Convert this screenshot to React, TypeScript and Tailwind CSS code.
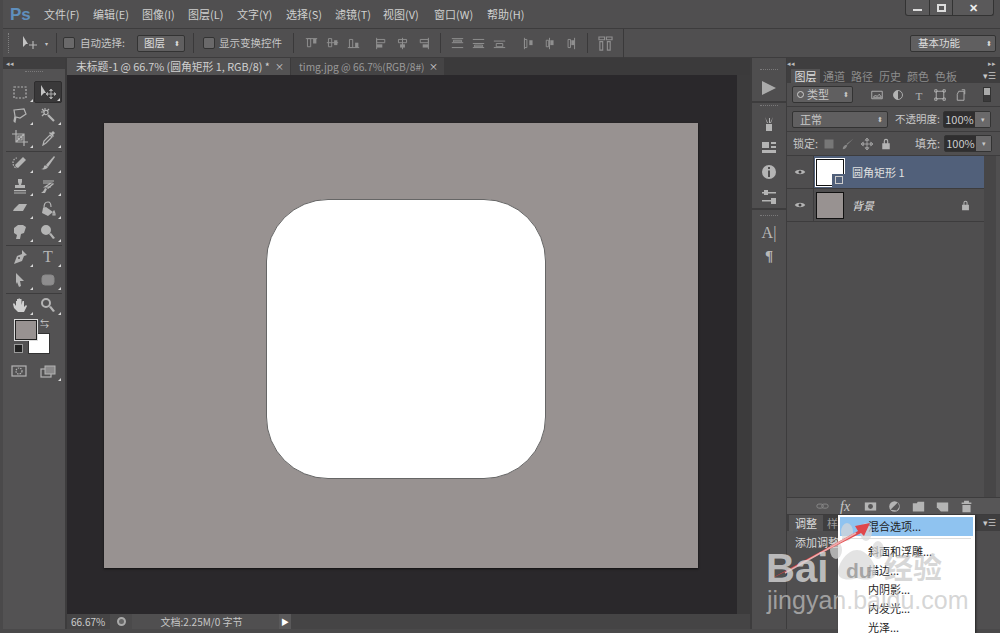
import type { ReactNode } from 'react';

const menus = [
  { label: '文件(F)', width: 'w-[49px]' },
  { label: '编辑(E)', width: 'w-[49px]' },
  { label: '图像(I)', width: 'w-[46px]' },
  { label: '图层(L)', width: 'w-[49px]' },
  { label: '文字(Y)', width: 'w-[49px]' },
  { label: '选择(S)', width: 'w-[49px]' },
  { label: '滤镜(T)', width: 'w-[48px]' },
  { label: '视图(V)', width: 'w-[51px]' },
  { label: '窗口(W)', width: 'w-[53px]' },
  { label: '帮助(H)', width: 'w-[40px]' },
];

function Glyph({ size = 16, children, className = '' }: { size?: number; children: ReactNode; className?: string }) {
  return (
    <svg width={size} height={size} viewBox="0 0 16 16" fill="#b4b4b4" stroke="none" className={className}>
      {children}
    </svg>
  );
}

const line = { fill: 'none', stroke: '#b4b4b4', strokeWidth: 1.2 };
const dim = { fill: 'none', stroke: '#8f8f8f', strokeWidth: 1.2 };

const toolIcons: ReactNode[][] = [
  [
    <rect x="2" y="3" width="12" height="11" {...line} strokeDasharray="2 1.5" />,
    <>
      <path d="M1 1v11l3-3 2 0z" fill="#c4c4c4" />
      <path d="M11 6v8M7 10h8M11 5l-1.500 1.500h3zM11 15l-1.500-1.500h3zM6 10l1.500-1.500v3zM16 10l-1.500-1.500v3z" {...line} strokeWidth={0.9} />
    </>,
  ],
  [
    <path d="M2 3l10-1 2 5-6 4-4-1-1 5-1-1 1-5z" {...line} />,
    <>
      <path d="M8 8l6 6" stroke="#b4b4b4" strokeWidth="2.200" />
      <path d="M5 1v3M1 5h3M2 2l2 2M9 2L7 4M2 9l2-2M8 5a2 2 0 1 1-4 1 2 2 0 0 1 4-1z" {...line} />
    </>,
  ],
  [
    <path d="M4 0v12h12M0 4h12v12M12 4L4 12M6 6h4v4H6z" {...line} />,
    <>
      <path d="M3 15l1-4 6-6 2 2-6 6z" {...line} />
      <path d="M9 3l1-1 1 1 2-2 2 2-2 2 1 1-1 1z" />
    </>,
  ],
  'sep' as never,
  [
    <>
      <path d="M5 3a4 5 0 1 0 0 10" {...line} strokeDasharray="1.500 1.200" />
      <path d="M4 12l-1-2 8-8 3 3-8 8z" />
    </>,
    <>
      <path d="M6 10L14 1l1 1-7 10z" />
      <path d="M1 14c2 0 3-1 3-3 1-1 3 0 4 1-1 2-4 3-7 2z" />
    </>,
  ],
  [
    <>
      <path d="M6 1h4v3l-1 3h4v3H3V7h4L6 4z" />
      <path d="M2 12h12v1.200H2zM2 14.500h12v1H2z" />
    </>,
    <>
      <path d="M3 5h8L5 9h6M3 3h11" {...line} />
      <path d="M5 10l2 1-2 4H1c2-1 3-3 4-5zM14 6L8 11l-1-1 6-5z" />
    </>,
  ],
  [
    <path d="M7 3h8l-4 7H1l1-2z" />,
    <>
      <path d="M6 6l7 5-5 4-6-3 1-5z" />
      <path d="M4 7c0-4 1-6 4-6 2 0 3 2 3 5M14 10c1 2 1 3 1 4h-2c0-2 0-3 1-4z" {...line} />
    </>,
  ],
  [
    <path d="M2 4l4-3h5l3 2-2 6-3 1-1 5H4l1-4-3-2z" />,
    <path d="M6 1a5 5 0 1 1 0 10A5 5 0 0 1 6 1zM9 10l2-1 4 5-2 1z" />,
  ],
  'sep' as never,
  [
    <>
      <path d="M10 1l5 5-3 1-2 5-8 3 3-8 5-2z" />
      <circle cx="7" cy="9" r="1" fill="#4f4e4f" />
    </>,
    <text x="8" y="13" textAnchor="middle" fontFamily="Liberation Serif" fontSize="16" fill="#b4b4b4">T</text>,
  ],
  [
    <path d="M4 1l8 8-4 0 1 5-2 1-2-5-1 2z" />,
    <rect x="2" y="3" width="12" height="10" rx="3" stroke="#888" strokeWidth="1" fill="#8e8d8e" />,
  ],
  'sep' as never,
  [
    <path d="M4 8V4h1v4V2h1.500v6V1.500H8V8V2h1.500v6l1-4h1.500v6l2-2 1 1-3 6H6L2 11 1 7l1-1 2 3z" fill="#d0d0d0" />,
    <path d="M6 1a5 5 0 1 1 0 10A5 5 0 0 1 6 1zM6 3a3 3 0 1 0 0 6 3 3 0 0 0 0-6zM9 10l2-1 4 5-2 1z" />,
  ],
];

// paths for the align and distribute buttons of the options bar
const alignIcons = [
  ['M1 2h14M3 2h4v10H3z', 'M10 2h4v6h-4z'],
  ['M1 7h14M3 2h4v10H3z', 'M10 4h4v6h-4z'],
  ['M1 13h14M3 3h4v10H3z', 'M10 7h4v6h-4z'],
];
const alignRowIcons = [
  ['M2 1v14M2 3h10v4H2z', 'M2 9h7v4H2z'],
  ['M8 1v14M3 3h10v4H3z', 'M5 9h6v4H5z'],
  ['M14 1v14M4 3h10v4H4z', 'M7 9h7v4H7z'],
];
const distributeRows = ['M1 2h14M1 7h14M1 13h14M3 4h10v2H3z', 'M1 3h14M1 8h14M1 13h14M3 10h10v2H3z', 'M1 5h14M1 13h14M4 8h8v4H4z'];
const distributeCols = [
  ['M3 1v14M3 3h3v10H3z', 'M9 4h4v6H9z'],
  ['M8 1v14M4 4h3v8H4z', 'M9 4h4v6H9z'],
  ['M13 1v14M5 3h3v10H5z', 'M9 4h4v6H9z'],
];

function CornerMark() {
  return <span className="absolute right-[1px] bottom-[1px] h-0 w-0 border-b-[3px] border-l-[3px] border-b-[#d8d8d8] border-l-transparent" />;
}

function Grip() {
  return <div className="mx-auto h-[2px] w-[18px] border-t border-dotted border-[#7a797a]" />;
}

function ToolPanel() {
  return (
    <aside className="flex w-[62px] flex-col bg-[#535253]">
      <div className="flex h-[11px] items-center bg-[#3f3e3f] pl-[3px] text-[7px] leading-none text-[#bbb]">◂◂</div>
      <div className="pt-[2px] pb-[8px]"><Grip /></div>
      <div className="flex flex-col">
        {toolIcons.map((row, i) =>
          (row as unknown) === 'sep' ? (
            <div key={i} className="mx-[3px] my-[0.5px] h-px bg-[#3d3c3d]" />
          ) : (
            <div key={i} className="flex h-[23px] pl-[3px]">
              {row.map((icon, j) => (
                <div
                  key={j}
                  className={`relative flex h-[22px] w-[28px] items-center justify-center ${i === 0 && j === 1 ? 'rounded-[2px] border border-[#2e2d2e] bg-[#3a393a]' : ''}`}
                >
                  <Glyph>{icon}</Glyph>
                  <CornerMark />
                </div>
              ))}
            </div>
          ),
        )}
      </div>
      <div className="mt-[3px] ml-[12px] flex items-start">
        <div className="z-10 h-[20px] w-[22px] border border-[#222] bg-[#989291] outline outline-[#ddd]" />
        <div className="mt-[-1px] ml-[3px] text-[9px] leading-[10px] text-[#ccc]">⇆</div>
      </div>
      <div className="mt-[-7px] ml-[11px] flex items-end">
        <div className="mb-[1px] h-[9px] w-[9px] border border-[#999] bg-[#222]" />
        <div className="ml-[5px] h-[21px] w-[22px] border border-[#333] bg-white" />
      </div>
      <div className="mt-[6px] flex items-center pl-[2px]">
        <div className="flex h-[22px] w-[28px] items-center justify-center">
          <Glyph>
            <rect x="1" y="3" width="14" height="10" {...line} />
            <circle cx="8" cy="8" r="3" {...line} strokeDasharray="1.500 1" />
          </Glyph>
        </div>
        <div className="relative ml-[1px] flex h-[22px] w-[28px] items-center justify-center">
          <Glyph>
            <rect x="1" y="6" width="10" height="8" {...line} />
            <rect x="5" y="3" width="10" height="8" fill="#8a898a" stroke="#b4b4b4" />
          </Glyph>
          <CornerMark />
        </div>
      </div>
    </aside>
  );
}

function AlignGroup({ icons }: { icons: string[][] }) {
  return (
    <div className="flex gap-[8px]">
      {icons.map(([outline, filled]) => (
        <Glyph key={outline} size={13}>
          <path d={outline} {...dim} />
          {filled && <path d={filled} fill="#8f8f8f" />}
        </Glyph>
      ))}
    </div>
  );
}

function OptionsBar() {
  return (
    <div className="flex h-[30px] items-center border-y border-[#3d3c3d] bg-[#504f50] text-[10.500px] text-[#c6c6c6]">
      <div className="ml-[5px] h-[20px] w-[3px] border-l border-dotted border-[#808080]" />
      <Glyph size={16} className="ml-[11px]">
        <path d="M1 1v11l3-3 2 0z" fill="#c4c4c4" />
        <path d="M11 6v8M7 10h8" {...line} />
      </Glyph>
      <span className="ml-[7px] w-[8px] text-[6px]">▾</span>
      <div className="ml-[3px] h-[20px] w-px bg-[#3a393a]" />
      <div className="ml-[6px] h-[12px] w-[12px] rounded-[2px] border border-[#333] bg-[#6a696a]" />
      <span className="ml-[5px] w-[49px] whitespace-nowrap">自动选择:</span>
      <div className="ml-[8px] flex h-[17px] w-[48px] items-center justify-between rounded-[2px] border border-[#333] bg-[#605f60] pr-[4px] pl-[6px] text-[#ddd]">
        图层<span className="text-[7px]">⬍</span>
      </div>
      <div className="ml-[8px] h-[20px] w-px bg-[#3a393a]" />
      <div className="ml-[9px] h-[12px] w-[12px] rounded-[2px] border border-[#333] bg-[#6a696a]" />
      <span className="ml-[4px] w-[66px] whitespace-nowrap">显示变换控件</span>
      <div className="ml-[8px] h-[20px] w-px bg-[#3a393a]" />
      <div className="ml-[11px]"><AlignGroup icons={alignIcons} /></div>
      <div className="ml-[15px]"><AlignGroup icons={alignRowIcons} /></div>
      <div className="ml-[10px] h-[20px] w-px bg-[#3a393a]" />
      <div className="ml-[10px]"><AlignGroup icons={distributeRows.map((d) => [d, ''])} /></div>
      <div className="ml-[16px]"><AlignGroup icons={distributeCols} /></div>
      <div className="ml-[10px] h-[20px] w-px bg-[#3a393a]" />
      <Glyph size={15} className="ml-[10px]">
        <path d="M1 1h6v3H1zM9 1h6v3H9zM2 6h3v9H2zM10 6h3v9h-3z" {...dim} />
      </Glyph>
      <div className="ml-[10px] h-[29px] w-px bg-[#3a393a]" />
      <div className="mr-[4px] ml-auto flex h-[17px] w-[86px] items-center justify-between rounded-[2px] border border-[#333] bg-[#605f60] pr-[3px] pl-[7px] text-[#ddd]">
        基本功能<span className="text-[7px]">⬍</span>
      </div>
    </div>
  );
}

function Document() {
  return (
    <main className="flex w-[683px] flex-col">
      <div className="flex h-[17px] bg-[#3b3a3b] leading-[17px]">
        <div className="flex w-[223px] items-center justify-between bg-[#535253] pr-[6px] pl-[9px] text-[10.800px] text-[#d0d0d0]">
          <span className="whitespace-nowrap">未标题-1 @ 66.7% (圆角矩形 1, RGB/8) *</span>
          <span className="text-[9px]">×</span>
        </div>
        <div className="ml-px flex w-[153px] items-center justify-between bg-[#454445] pr-[6px] pl-[8px] text-[10.200px] text-[#9a9a9a]">
          <span className="whitespace-nowrap">timg.jpg @ 66.7%(RGB/8#)</span>
          <span className="text-[9px] text-[#ddd]">×</span>
        </div>
      </div>
      <div className="flex flex-1">
        <div className="flex-1 bg-[#2a282b] pt-[48px] pl-[37px]">
          <div className="h-[445px] w-[594px] bg-[#989291] pt-[76px] pl-[162px] shadow-[0_1px_2px_#111]">
            <div className="h-[280px] w-[280px] rounded-[62px] border border-[#666] bg-white" />
          </div>
        </div>
        <div className="w-[13px] bg-[#3c3b3c]" />
      </div>
      <div className="flex h-[15px] items-center bg-[#454445] text-[10px] text-[#c6c6c6]">
        <span className="w-[43px] pl-[4px] text-[#ccc]">66.67%</span>
        <div className="flex h-full w-[22px] items-center justify-center bg-[#4b4a4b]">
          <span className="h-[9px] w-[9px] rounded-full border-2 border-[#aaa] bg-[#666]" />
        </div>
        <div className="flex h-full w-[147px] items-center justify-center whitespace-nowrap bg-[#504f50] pr-[8px]">文档:2.25M/0 字节</div>
        <div className="flex h-full w-[12px] items-center justify-center bg-[#5a595a] text-[8px] text-white">▶</div>
        <div className="flex-1" />
      </div>
    </main>
  );
}

function Dock() {
  return (
    <div className="flex w-[34px] flex-col bg-[#4f4e4f] pt-[11px]">
      <section className="flex h-[34px] flex-col items-center border-b-2 border-[#3d3c3d]">
        <Grip />
        <Glyph size={16} className="mt-[9px]"><path d="M1 1l14 7-14 7z" fill="#aaa" /></Glyph>
      </section>
      <section className="flex h-[107px] flex-col items-center gap-[7px] border-b-2 border-[#3d3c3d] pt-[2px]">
        <Grip />
        <Glyph className="mt-[2px]"><path d="M5 8h6v7H5zM4 1l3 6H6zM12 1L9 7h1zM8 2h1v5H8z" /></Glyph>
        <Glyph><path d="M1 3h7v6H1zM10 3h5v2h-5zM10 7h5v2h-5zM1 11h14v3H1z" /></Glyph>
        <Glyph className="mt-[2px]"><circle cx="8" cy="8" r="7" /><path d="M7 6.500h2V13H7zM7 3h2v2H7z" fill="#4f4e4f" /></Glyph>
        <Glyph className="mt-[2px]"><path d="M1 3h14v1.500H1zM1 11h14v1.500H1zM3 1h4v5H3zM10 9h5v6h-5z" /></Glyph>
      </section>
      <section className="flex flex-col items-center gap-[7px] pt-[5px]">
        <Grip />
        <span className="font-['Liberation_Serif',serif] text-[16px] leading-[17px] text-[#b8b8b8]">A|</span>
        <span className="font-['Liberation_Serif',serif] text-[15px] leading-[17px] font-bold text-[#b8b8b8]">¶</span>
      </section>
    </div>
  );
}

function LayerRow({ selected, name, italic }: { selected?: boolean; name: string; italic?: boolean }) {
  return (
    <div className={`flex h-[33px] items-center border-b border-[#3d3c3d] ${selected ? 'bg-[#51607a]' : 'bg-[#4f4e4f]'}`}>
      <div className={`flex h-full w-[27px] items-center justify-center border-r border-[#3d3c3d] ${selected ? 'bg-[#4f4e4f]' : ''}`}>
        <Glyph size={12}>
          <path d="M1 8c3-4 11-4 14 0-3 4-11 4-14 0z" />
          <circle cx="8" cy="8" r="2" fill="#3d3c3d" />
        </Glyph>
      </div>
      <div className={`relative ml-[2px] h-[27px] w-[28px] border ${selected ? 'border-[#111] bg-white outline outline-white' : 'border-[#111] bg-[#989291]'}`}>
        {selected && <div className="absolute right-[-2px] bottom-[-2px] flex h-[13px] w-[13px] items-center justify-center bg-[#51607a]"><span className="h-[8px] w-[8px] border border-[#ccc]" /></div>}
      </div>
      <span className={`ml-[8px] text-[11px] text-[#e0e0e0] ${italic ? 'italic' : ''}`}>{name}</span>
      {!selected && (
        <Glyph size={11} className="mr-[13px] ml-auto">
          <path d="M3 7h10v8H3zM5 7V4a3 3 0 0 1 6 0v3H9.500V4a1.500 1.500 0 0 0-3 0v3z" />
        </Glyph>
      )}
    </div>
  );
}

function LayersPanel() {
  const tabs = ['通道', '路径', '历史', '颜色', '色板'];
  const filters = [
    <path d="M1 3h14v10H1zM3 11l3-3 2 2 3-3 3 4z" {...line} />,
    <><circle cx="8" cy="8" r="6" {...line} /><path d="M8 2a6 6 0 0 0 0 12z" /></>,
    <text x="8" y="14" textAnchor="middle" fontFamily="Liberation Serif" fontSize="15" fill="#b4b4b4">T</text>,
    <path d="M3 3h10v10H3zM1 1h3v3H1zM12 1h3v3h-3zM1 12h3v3H1zM12 12h3v3h-3z" {...line} />,
    <path d="M5 3h7v12H3V7zM9 1h4v6" {...line} />,
  ];
  const lockIcons = [
    <path d="M2 2h12v12H2z" fill="#777" />,
    <path d="M15 1L7 9 6 8zM1 15c0-3 2-6 5-6l1 1c-1 3-3 5-6 5z" fill="#8a8a8a" />,
    <path d="M8 1v14M1 8h14M8 0l-2.500 3h5zM8 16l-2.500-3h5zM0 8l3-2.500v5zM16 8l-3-2.500v5z" {...line} strokeWidth={1} />,
    <path d="M3 7h10v8H3zM5 7V4a3 3 0 0 1 6 0v3H9.500V4a1.500 1.500 0 0 0-3 0v3z" />,
  ];
  return (
    <div className="flex flex-1 flex-col text-[11px] text-[#c8c8c8]">
      <div className="flex h-[11px] items-center justify-between bg-[#3f3e3f] pr-[4px] text-[7px] text-[#bbb]">
        <span>◂◂</span>
        <span>▸▸</span>
      </div>
      <div className="flex h-[14px] items-end bg-[#3f3e3f] pl-[4px] leading-[14px]">
        <span className="w-[29px] bg-[#535253] text-center text-[#ddd]">图层</span>
        {tabs.map((t) => (
          <span key={t} className="w-[28px] text-center text-[#8d8d8d]">{t}</span>
        ))}
        <span className="mr-[4px] ml-auto text-[9px]">▾☰</span>
      </div>
      <div className="flex h-[24px] items-center border-b border-[#3d3c3d] bg-[#504f50] pl-[5px]">
        <div className="flex h-[17px] w-[61px] items-center justify-between rounded-[2px] border border-[#333] bg-[#605f60] pr-[3px] pl-[4px]">
          <span className="flex items-center gap-[3px]"><span className="h-[7px] w-[7px] rounded-full border border-[#ccc]" />类型</span>
          <span className="text-[7px]">⬍</span>
        </div>
        <div className="ml-[18px] flex gap-[9px]">
          {filters.map((f, i) => <Glyph key={i} size={12}>{f}</Glyph>)}
        </div>
        <div className="ml-[16px] flex h-[15px] w-[8px] flex-col border border-[#333]"><span className="h-1/2 bg-[#aaa]" /><span className="h-1/2 bg-[#3a393a]" /></div>
      </div>
      <div className="flex h-[25px] items-center border-b border-[#3d3c3d] bg-[#504f50] pl-[5px]">
        <div className="flex h-[17px] w-[96px] items-center justify-between rounded-[2px] border border-[#333] bg-[#605f60] pr-[4px] pl-[7px]">正常<span className="text-[7px]">⬍</span></div>
        <span className="ml-[7px] w-[46px] whitespace-nowrap text-[10.500px]">不透明度:</span>
        <div className="ml-[2px] flex h-[17px] w-[48px] rounded-[2px] border border-[#333]">
          <span className="w-[31px] bg-[#2f2e2f] text-center leading-[15px] text-[#ccc]">100%</span>
          <span className="flex-1 bg-[#6a696a] text-center text-[7px] leading-[15px]">▾</span>
        </div>
      </div>
      <div className="flex h-[24px] items-center border-b border-[#3d3c3d] bg-[#504f50] pl-[6px]">
        <span className="w-[30px]">锁定:</span>
        <div className="flex gap-[7px]">
          {lockIcons.map((l, i) => <Glyph key={i} size={12}>{l}</Glyph>)}
        </div>
        <span className="ml-[23px] w-[27px]">填充:</span>
        <div className="ml-[2px] flex h-[17px] w-[48px] rounded-[2px] border border-[#333]">
          <span className="w-[31px] bg-[#2f2e2f] text-center leading-[15px] text-[#ccc]">100%</span>
          <span className="flex-1 bg-[#6a696a] text-center text-[7px] leading-[15px]">▾</span>
        </div>
      </div>
      <div className="flex flex-1">
        <div className="flex flex-1 flex-col bg-[#4f4e4f]">
          <LayerRow selected name="圆角矩形 1" />
          <LayerRow name="背景" italic />
        </div>
        <div className="w-[12px] bg-[#474647]" />
        <div className="w-[4px] bg-[#504f50]" />
      </div>
      <div className="flex h-[18px] items-center justify-end gap-[11px] border-y border-[#3d3c3d] bg-[#575657] pr-[27px]">
        <Glyph size={13}><rect x="1" y="5" width="8" height="5" rx="2.500" {...line} stroke="#888" /><rect x="7" y="5" width="8" height="5" rx="2.500" {...line} stroke="#888" /></Glyph>
        <span className="w-[13px] font-['Liberation_Serif',serif] text-[14px] italic">fx</span>
        <Glyph size={13}><path d="M1 3h14v10H1z" /><circle cx="8" cy="8" r="3" fill="#575657" /></Glyph>
        <Glyph size={13}><circle cx="8" cy="8" r="6.500" /><path d="M3 12L12 3l2 5-3 5z" fill="#575657" /></Glyph>
        <Glyph size={13}><path d="M1 4h5l1-2h8v12H1z" /></Glyph>
        <Glyph size={13}><path d="M1 3h14v11H6l-5-5z" /></Glyph>
        <Glyph size={13}><path d="M2 3h12v2H2zM5 1h6v2H5zM3 6h10v9H3z" /></Glyph>
      </div>
      <div className="flex h-[16px] bg-[#3f3e3f] pl-[2px] leading-[16px]">
        <span className="w-[34px] bg-[#535253] text-center text-[#ddd]">调整</span>
        <span className="ml-[4px] text-[#999]">样</span>
        <span className="mr-[4px] ml-auto text-[9px]">▾☰</span>
      </div>
      <div className="h-[98px] bg-[#504f50] pt-[3px] pl-[8px] text-[#d8d8d8]">添加调整</div>
    </div>
  );
}

function ContextMenu() {
  const items = ['斜面和浮雕...', '描边...', '内阴影...', '内发光...', '光泽...'];
  return (
    <div className="absolute top-[515px] left-[838px] h-[118px] w-[137px] bg-white p-[2px] text-[11px] text-[#222] shadow-[1px_1px_2px_#222]">
      <div className="h-[19px] bg-[#8fc3f0] pl-[28px] leading-[19px]">混合选项...</div>
      <div className="mx-[2px] mt-[2px] mb-[3px] h-px bg-[#ddd]" />
      {items.map((item) => (
        <div key={item} className="h-[19px] pl-[28px] leading-[19px]">{item}</div>
      ))}
    </div>
  );
}

function Watermark() {
  return (
    <div className="pointer-events-none absolute inset-0 overflow-hidden">
      <svg width="1000" height="633" className="absolute inset-0">
        <g fill="#d8d8d8" opacity="0.7">
          <ellipse cx="847" cy="532" rx="6" ry="9" />
          <ellipse cx="866" cy="532" rx="6" ry="9" />
          <ellipse cx="836" cy="550" rx="6" ry="9" />
          <ellipse cx="878" cy="550" rx="6" ry="9" />
          <path d="M857 550c10 0 19 14 19 22 0 8-10 9-19 6-9 3-19 2-19-6 0-8 9-22 19-22z" />
        </g>
        <path d="M765 582L858 531 855 526 870 523 864 536 861 533z" fill="#e23f42" opacity="0.95" />
        <path d="M785 573L856 533" stroke="#f2b8b8" strokeWidth="1.500" opacity="0.9" />
      </svg>
      <span className="absolute top-[543px] left-[766px] font-['Liberation_Sans',sans-serif] text-[40px] leading-[50px] font-bold text-[#d8d8d8]/80">Bai</span>
      <span className="absolute top-[558px] left-[846px] font-['Liberation_Sans',sans-serif] text-[21px] leading-[26px] font-bold text-[#8a8a8a]/70">du</span>
      <span className="absolute top-[548px] left-[884px] text-[29px] leading-[36px] font-bold text-[#bdbdbd]/60">经验</span>
      <span className="absolute top-[585px] left-[767px] font-['Liberation_Sans',sans-serif] text-[25px] leading-[30px] whitespace-nowrap text-[#c4c4c4]/70">jingyan.baidu.com</span>
    </div>
  );
}

export default function App() {
  return (
    <div className="relative flex h-[633px] w-[1000px] flex-col overflow-hidden bg-[#4a494a] pl-[3px] font-['Noto_Sans_CJK_SC','Liberation_Sans',sans-serif]">
      <header className="flex h-[28px] items-center bg-[#504f50] text-[11px] text-[#cfcfcf]">
        <span className="ml-[7px] w-[34px] font-['Liberation_Sans',sans-serif] text-[17px] leading-none font-bold text-[#5f8fbd]">Ps</span>
        <nav className="flex">
          {menus.map((m) => (
            <span key={m.label} className={`${m.width} whitespace-nowrap`}>{m.label}</span>
          ))}
        </nav>
        <div className="mr-[6px] mb-[12px] ml-auto flex h-[16px] items-center rounded-b-[3px] border border-t-0 border-[#333] bg-[#5a595a] text-[#eee]">
          <span className="flex h-full w-[24px] items-center justify-center border-r border-[#333]"><span className="mt-[4px] h-[2px] w-[9px] bg-[#ddd]" /></span>
          <span className="flex h-full w-[23px] items-center justify-center border-r border-[#333]"><span className="h-[8px] w-[9px] border-2 border-[#ddd]" /></span>
          <span className="flex h-full w-[40px] items-center justify-center text-[11px] leading-none font-bold">✕</span>
        </div>
      </header>
      <OptionsBar />
      <div className="flex flex-1 pb-[4px]">
        <ToolPanel />
        <div className="w-[2px] bg-[#3d3c3d]" />
        <Document />
        <div className="w-[2px] bg-[#3d3c3d]" />
        <Dock />
        <div className="w-px bg-[#3d3c3d]" />
        <LayersPanel />
      </div>
      <ContextMenu />
      <Watermark />
    </div>
  );
}
